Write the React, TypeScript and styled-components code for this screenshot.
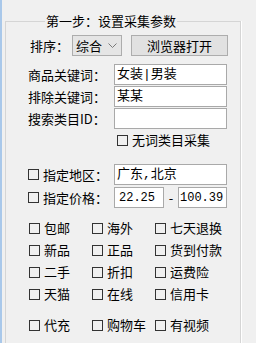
import styled, { createGlobalStyle } from "styled-components";

const GlobalStyle = createGlobalStyle`
  html, body {
    margin: 0;
    background: #f0f0f0;
  }
  body {
    font-family: "Noto Sans CJK SC", "Noto Sans", sans-serif;
    font-size: 13px;
    color: #000;
  }
`;

const Frame = styled.div`
  height: 343px;
  overflow: hidden;
  border-left: 2px solid #a9c8ea;
  padding-left: 3px;
  box-sizing: border-box;
`;

const GroupBox = styled.fieldset`
  width: 236px;
  height: 360px;
  box-sizing: border-box;
  margin: 13px 0 0 0;
  padding: 0 0 0 22px;
  border: 1px solid #d5d5d5;
  box-shadow: 1px 0 0 #fff;
  min-width: 0;
`;

const Title = styled.legend`
  margin-left: 17px;
  padding: 0 1px;
  line-height: 16px;
  font-size: 13px;
`;

const SortRow = styled.div`
  display: flex;
  align-items: center;
  height: 21px;
  margin-top: 6px;
  padding-left: 2px;
`;

const SortLabel = styled.span`
  width: 42px;
  line-height: 16px;
`;

const Select = styled.div`
  width: 50px;
  height: 21px;
  box-sizing: border-box;
  border: 1px solid #adadad;
  background: #e5e5e5;
  display: flex;
  align-items: center;
  justify-content: space-between;
  padding: 0 4px 0 3px;
  line-height: 16px;
`;

const Button = styled.div`
  margin-left: 9px;
  width: 97px;
  height: 21px;
  box-sizing: border-box;
  border: 1px solid #adadad;
  background: #e1e1e1;
  display: flex;
  align-items: center;
  justify-content: center;
  line-height: 16px;
`;

const FieldRow = styled.div<{ $top?: number }>`
  display: flex;
  align-items: center;
  height: 21px;
  margin-top: ${(p) => p.$top ?? 1}px;
`;

const FieldLabel = styled.span`
  width: 86px;
  display: flex;
  align-items: center;
  line-height: 16px;
  white-space: nowrap;
`;

const TextBox = styled.div<{ $width?: number; $small?: boolean; $pad?: number }>`
  width: ${(p) => p.$width ?? 113}px;
  height: 21px;
  box-sizing: border-box;
  border: 1px solid #a9a9a9;
  background: #fff;
  display: flex;
  align-items: center;
  padding: 0 1px 0 ${(p) => p.$pad ?? 2}px;
  font-family: "Liberation Mono", "Noto Sans CJK SC", monospace;
  font-size: ${(p) => (p.$small ? 12 : 13)}px;
  line-height: 16px;
  white-space: nowrap;
  overflow: hidden;
`;

const Dash = styled.span`
  width: 14px;
  text-align: center;
  line-height: 16px;
`;

const Box = styled.span`
  width: 11px;
  height: 11px;
  box-sizing: border-box;
  border: 1px solid #333;
  flex: none;
`;

const Check = styled.label`
  display: flex;
  align-items: center;
  gap: 4px;
  line-height: 16px;
  white-space: nowrap;
`;

const SoloCheck = styled.div`
  display: flex;
  height: 20px;
  align-items: center;
  padding-left: 89px;
  margin-top: 1px;
`;

const Grid = styled.div<{ $top: number }>`
  display: grid;
  grid-template-columns: 63px 63px auto;
  grid-auto-rows: 22px;
  align-items: center;
  margin-top: ${(p) => p.$top}px;
  padding-left: 1px;
`;

const Chevron = () => (
  <svg width="9" height="6" viewBox="0 0 9 6">
    <path d="M0.5 0.5 L4.5 4.5 L8.5 0.5" fill="none" stroke="#7a7a7a" strokeWidth="1" />
  </svg>
);

const options = [
  ["包邮", "海外", "七天退换"],
  ["新品", "正品", "货到付款"],
  ["二手", "折扣", "运费险"],
  ["天猫", "在线", "信用卡"],
];

const extras = ["代充", "购物车", "有视频"];

const CheckItem = ({ text }: { text: string }) => (
  <Check>
    <Box />
    {text}
  </Check>
);

const App = () => {
  return (
    <>
      <GlobalStyle />
      <Frame>
        <GroupBox>
          <Title>第一步：设置采集参数</Title>
          <SortRow>
            <SortLabel>排序：</SortLabel>
            <Select>
              综合
              <Chevron />
            </Select>
            <Button>浏览器打开</Button>
          </SortRow>
          <FieldRow $top={8}>
            <FieldLabel>商品关键词：</FieldLabel>
            <TextBox>女装|男装</TextBox>
          </FieldRow>
          <FieldRow>
            <FieldLabel>排除关键词：</FieldLabel>
            <TextBox>某某</TextBox>
          </FieldRow>
          <FieldRow>
            <FieldLabel>搜索类目ID：</FieldLabel>
            <TextBox />
          </FieldRow>
          <SoloCheck>
            <CheckItem text="无词类目采集" />
          </SoloCheck>
          <FieldRow $top={14}>
            <FieldLabel>
              <Check>
                <Box />
                指定地区：
              </Check>
            </FieldLabel>
            <TextBox>广东,北京</TextBox>
          </FieldRow>
          <FieldRow $top={2}>
            <FieldLabel>
              <Check>
                <Box />
                指定价格：
              </Check>
            </FieldLabel>
            <TextBox $width={50} $small $pad={4}>
              22.25
            </TextBox>
            <Dash>-</Dash>
            <TextBox $width={49} $small $pad={1}>
              100.39
            </TextBox>
          </FieldRow>
          <Grid $top={9}>
            {options.flat().map((o) => (
              <CheckItem key={o} text={o} />
            ))}
          </Grid>
          <Grid $top={9}>
            {extras.map((o) => (
              <CheckItem key={o} text={o} />
            ))}
          </Grid>
        </GroupBox>
      </Frame>
    </>
  );
};

export default App;
